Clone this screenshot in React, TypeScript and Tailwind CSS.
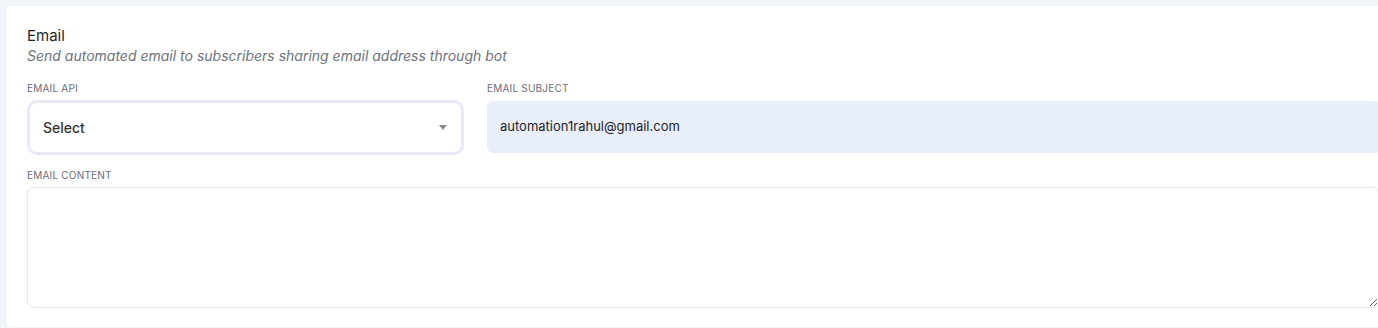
import React from 'react';

const App = () => {
    return (
        <div className="w-[1378px] h-[328px] overflow-hidden bg-[#f1f4f9] pt-[5px] pl-[5px] font-['Inter',sans-serif]">
            <div className="w-[1398px] bg-white rounded-tl-[4px] rounded-bl-[6px] border-l border-t border-[#eceef3] px-[21px] pt-[20px] pb-[19px]">
                <h3 className="text-[15px] leading-[20px] text-[#1f1f1f]">Email</h3>
                <p className="text-[14px] leading-[20px] italic text-[#6b7280]">Send automated email to subscribers sharing email address through bot</p>

                <div className="grid grid-cols-[437px_1fr] gap-[23px] mt-[15px]">
                    <div>
                        <label className="block text-[10px] leading-[14px] tracking-[0.2px] text-[#6b6b7a] mb-[5px]">EMAIL API</label>
                        <div className="h-[55px] rounded-[10px] border-[3px] border-[#e9e8f8] flex items-center justify-between pl-[13px] pr-[14px]">
                            <span className="text-[14px] font-medium text-[#333]">Select</span>
                            <span className="w-0 h-0 border-l-[4px] border-r-[4px] border-t-[5px] border-l-transparent border-r-transparent border-t-[#8a8a8a]" />
                        </div>
                    </div>
                    <div>
                        <label className="block text-[10px] leading-[14px] tracking-[0.2px] text-[#6b6b7a] mb-[6px]">EMAIL SUBJECT</label>
                        <div className="h-[52px] rounded-[7px] bg-[#e8eefb] flex items-center px-[13px]">
                            <span className="text-[13px] text-[#1f1f1f]">automation1rahul@gmail.com</span>
                        </div>
                    </div>
                </div>

                <label className="block text-[10px] leading-[14px] tracking-[0.2px] text-[#6b6b7a] mt-[13px] mb-[5px]">EMAIL CONTENT</label>
                <textarea className="block w-[1352px] h-[121px] rounded-[6px] border border-[#e5e7eb] outline-none resize" />
            </div>
        </div>
    );
};

export default App;
